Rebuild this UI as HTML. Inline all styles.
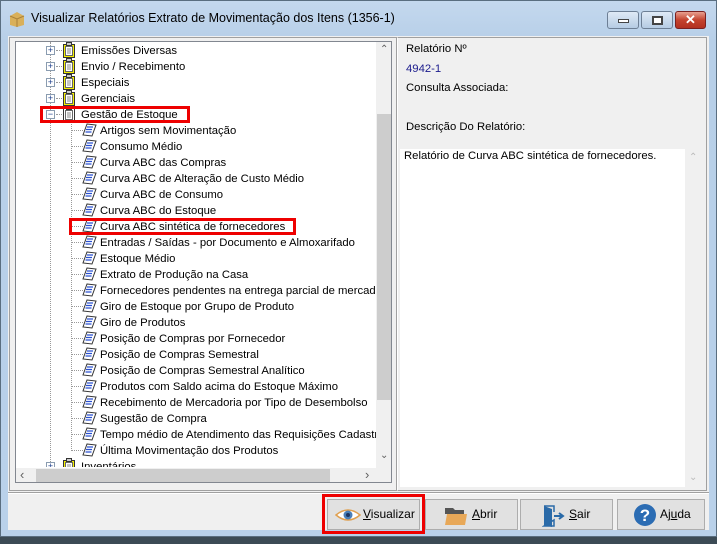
<!DOCTYPE html>
<html><head><meta charset="utf-8"><style>
*{margin:0;padding:0;box-sizing:border-box}
body{width:717px;height:544px;overflow:hidden;background:#3c4b55;font-family:"Liberation Sans",sans-serif;font-size:11.3px;color:#000;position:relative}
.frame{position:absolute;left:0;top:0;width:717px;height:537px;background:linear-gradient(#c4d8ee,#b7cfe8 40px,#b9d1ea);border:1px solid #5a6e80}
.title{position:absolute;left:31px;top:11px;font-size:12.5px;color:#000}
.client{position:absolute;left:8px;top:36px;width:701px;height:494px;background:#f0f0f0}
.a{position:absolute}
.row{position:absolute;height:16px;line-height:16px;white-space:nowrap}
.hl{position:absolute;border-top:1px dotted #999;height:0}
.vl{position:absolute;border-left:1px dotted #999;width:0}
.exp{position:absolute;width:9px;height:9px;border:1px solid #8a9cb0;background:#fff;font-size:9px;line-height:7px;text-align:center;color:#1c3f8c}
.btn{position:absolute;top:499px;height:31px;background:#e1e1e1;border:1px solid #adadad;line-height:29px;font-size:12px}
.btn u{text-decoration:underline}
.wb{position:absolute;top:11px;height:18px;border:1px solid #6d7f95;border-radius:3px;background:linear-gradient(#dfeaf6,#b5cbe3)}
</style></head><body>
<div class="frame"></div>
<svg class="a" style="left:8px;top:10px" width="18" height="18"><path d="M2 6 L9 2 L16 6 L16 15 L9 17 L2 15Z" fill="#d9b05a"/><path d="M2 6 L9 9 L16 6 M9 9 L9 17" stroke="#a9813a" fill="none"/></svg>
<div class="title">Visualizar Relatórios Extrato de Movimentação dos Itens (1356-1)</div>
<div class="wb" style="left:607px;width:32px"><div class="a" style="left:10px;top:7px;width:11px;height:4px;border:1px solid #444;background:#fff"></div></div>
<div class="wb" style="left:641px;width:32px"><div class="a" style="left:10px;top:4px;width:11px;height:9px;border:2px solid #444;background:#fff"></div></div>
<div class="wb" style="left:675px;width:31px;border-color:#7a2020;background:linear-gradient(#e8a090,#c4432f 50%,#b23020)"><div class="a" style="left:0;top:0;width:29px;text-align:center;color:#fff;font-weight:bold;font-size:13px;line-height:16px">✕</div></div>
<div class="client"></div>
<div class="a" style="left:9px;top:37px;width:388px;height:454px;border:1px solid #a0a0a0;background:#f0f0f0"></div>
<div class="a" style="left:15px;top:41px;width:377px;height:442px;border:1px solid #828790;background:#fff;overflow:hidden">
<div class="a" style="left:360px;top:0;width:17px;height:426px;background:#f0f0f0"></div>
<div class="a" style="left:361px;top:72px;width:15px;height:286px;background:#cdcdcd"></div>
<div class="a" style="left:364px;top:2px;color:#606060;font-size:10px">&#8963;</div>
<div class="a" style="left:364px;top:408px;color:#606060;font-size:10px">&#8964;</div>
<div class="a" style="left:0;top:426px;width:377px;height:16px;background:#f0f0f0"></div>
<div class="a" style="left:20px;top:427px;width:294px;height:14px;background:#cdcdcd"></div>
<div class="a" style="left:4px;top:425px;color:#606060;font-size:13px">‹</div>
<div class="a" style="left:349px;top:425px;color:#606060;font-size:13px">›</div>
</div>
<div class="a" style="left:16px;top:42px;width:360px;height:425px;overflow:hidden">
<div class="vl" style="left:34px;top:0;height:430px"></div>
<div class="vl" style="left:55px;top:80px;height:329px"></div>
</div>
<div id="tree" class="a" style="left:0;top:0;width:376px;height:467px;overflow:hidden"></div>
<div class="a" style="left:397px;top:37px;width:310px;height:454px;border:1px solid #a0a0a0;border-left-color:#fff"></div>
<div class="a" style="left:406px;top:43px">Relatório Nº</div>
<div class="a" style="left:406px;top:63px;color:#1a1a8c">4942-1</div>
<div class="a" style="left:406px;top:82px">Consulta Associada:</div>
<div class="a" style="left:406px;top:121px">Descrição Do Relatório:</div>
<div class="a" style="left:400px;top:149px;width:301px;height:338px;background:#fff"></div>
<div class="a" style="left:685px;top:149px;width:16px;height:338px;background:#f0f0f0"></div>
<div class="a" style="left:404px;top:150px">Relatório de Curva ABC sintética de fornecedores.</div>
<div class="a" style="left:689px;top:152px;color:#bbb;font-size:10px">&#8963;</div>
<div class="a" style="left:689px;top:472px;color:#bbb;font-size:10px">&#8964;</div>
<div class="a" style="left:8px;top:492px;width:701px;height:1px;background:#a0a0a0"></div>
<div class="a" style="left:8px;top:493px;width:701px;height:1px;background:#fff"></div>
<div class="btn" style="left:327px;width:93px"><svg class="a" style="left:7px;top:8px" width="26" height="14"><path d="M1 7 Q13 -3 25 7 Q13 17 1 7Z" fill="#fff" stroke="#e0a050" stroke-width="1.5"/><circle cx="13" cy="7" r="4.5" fill="#4a7fb8"/><circle cx="13" cy="7" r="2" fill="#1c3560"/></svg><span class="a" style="left:35px;top:0"><u>V</u>isualizar</span></div>
<div class="a" style="left:322px;top:494px;width:103px;height:40px;border:3px solid #e00"></div>
<div class="btn" style="left:425px;width:93px"><svg class="a" style="left:18px;top:6px" width="24" height="20"><path d="M1 2 H9 L11 4 H20 V8 H1Z" fill="#555"/><path d="M1 19 L3 8 H23 L21 19Z" fill="#e8a858"/></svg><span class="a" style="left:46px;top:0"><u>A</u>brir</span></div>
<div class="btn" style="left:520px;width:93px"><svg class="a" style="left:21px;top:4px" width="24" height="24"><path d="M2 2 H12 V8 M12 16 V22 H2Z" fill="none" stroke="#2a6aa8" stroke-width="1.5"/><path d="M2 2 L10 5 V23 L2 21Z" fill="#2a6aa8"/><path d="M12 12 H20 M17 9 L21 12 L17 15" stroke="#2a6aa8" stroke-width="2" fill="none"/></svg><span class="a" style="left:48px;top:0"><u>S</u>air</span></div>
<div class="btn" style="left:617px;width:88px"><svg class="a" style="left:15px;top:3px" width="24" height="24"><circle cx="12" cy="12" r="11" fill="#2b6cb3"/><text x="12" y="18" text-anchor="middle" font-family="Liberation Sans" font-weight="bold" font-size="17" fill="#fff">?</text></svg><span class="a" style="left:42px;top:0">Aj<u>u</u>da</span></div>
<script>
var tops=["Emissões Diversas","Envio / Recebimento","Especiais","Gerenciais","Gestão de Estoque"];
var ch=["Artigos sem Movimentação","Consumo Médio","Curva ABC das Compras","Curva ABC de Alteração de Custo Médio","Curva ABC de Consumo","Curva ABC do Estoque","Curva ABC sintética de fornecedores","Entradas / Saídas - por Documento e Almoxarifado","Estoque Médio","Extrato de Produção na Casa","Fornecedores pendentes na entrega parcial de mercadorias","Giro de Estoque por Grupo de Produto","Giro de Produtos","Posição de Compras por Fornecedor","Posição de Compras Semestral","Posição de Compras Semestral Analítico","Produtos com Saldo acima do Estoque Máximo","Recebimento de Mercadoria por Tipo de Desembolso","Sugestão de Compra","Tempo médio de Atendimento das Requisições Cadastradas","Última Movimentação dos Produtos"];
var h="";
function clip(c,y){return '<svg class="a" style="left:62px;top:'+(y-9)+'px" width="14" height="18"><rect x="1.5" y="3.5" width="11" height="13" fill="'+c+'" stroke="#333"/><rect x="3.5" y="5.5" width="7" height="9" fill="#fff" stroke="#666"/><rect x="4.5" y="1.5" width="5" height="3" fill="#ccc" stroke="#333"/><path d="M5 8h4M5 10h4M5 12h4" stroke="#888"/></svg>';}
function doc(y){return '<svg class="a" style="left:82px;top:'+(y-7)+'px" width="15" height="14"><path d="M5 1 L14 2 L10 13 L1 12Z" fill="#fff" stroke="#333"/><path d="M5 4h6M4 6.5h6M3.5 9h6" stroke="#2a50d0" stroke-width="1.2"/></svg>';}
for(var i=0;i<5;i++){var y=50+16*i;
h+='<div class="hl" style="left:56px;top:'+y+'px;width:8px"></div>';
h+='<div class="exp" style="left:46px;top:'+(y-4)+'px">'+(i==4?'−':'+')+'</div>';
h+=clip(i==4?'#fff':'#f5f000',y);
h+='<div class="row" style="left:81px;top:'+(y-7)+'px">'+tops[i]+'</div>';}
for(var j=0;j<ch.length;j++){var y=130+16*j;
h+='<div class="hl" style="left:72px;top:'+y+'px;width:11px"></div>';
h+=doc(y);
h+='<div class="row" style="left:100px;top:'+(y-7)+'px">'+ch[j]+'</div>';}
var y=466;h+='<div class="exp" style="left:46px;top:'+(y-4)+'px">+</div>'+clip('#f5f000',y)+'<div class="row" style="left:81px;top:'+(y-7)+'px">Inventários</div>';
h+='<div class="a" style="left:40px;top:106px;width:150px;height:17px;border:3px solid #e00"></div>';
h+='<div class="a" style="left:69px;top:218px;width:227px;height:17px;border:3px solid #e00"></div>';
document.getElementById("tree").innerHTML=h;
</script>
</body></html>
